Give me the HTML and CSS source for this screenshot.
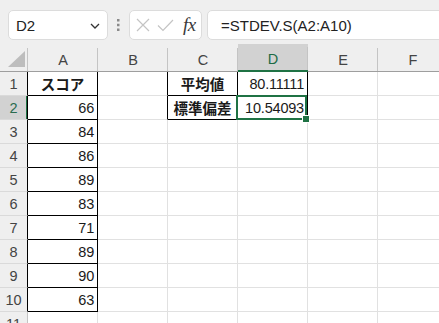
FILE: index.html
```html
<!DOCTYPE html>
<html lang="ja">
<head>
    <meta charset="UTF-8">
    <title>STDEV.S</title>
    <link rel="stylesheet" href="styles.css">
</head>
<body>

    <div class="toolbar">
        <div class="namebox">
            <span>D2</span>
            <svg width="10" height="6" viewBox="0 0 10 6"><path d="M1 1 L5 5 L9 1" fill="none" stroke="#333" stroke-width="1.3"/></svg>
        </div>
        <div class="grip">
            <svg width="3" height="12" viewBox="0 0 3 12"><rect x="0" y="0" width="2.5" height="2.5" fill="#8a8a8a"/><rect x="0" y="4.75" width="2.5" height="2.5" fill="#8a8a8a"/><rect x="0" y="9.5" width="2.5" height="2.5" fill="#8a8a8a"/></svg>
        </div>
        <div class="fxbox">
            <svg width="14" height="14" viewBox="0 0 14 14"><path d="M1 1 L13 13 M13 1 L1 13" stroke="#c4c4c4" stroke-width="1.2"/></svg>
            <svg width="17" height="13" viewBox="0 0 17 13"><path d="M1 6.5 L6 11.5 L16 1" fill="none" stroke="#c4c4c4" stroke-width="1.2"/></svg>
            <span class="fx">fx</span>
        </div>
        <div class="formula">=STDEV.S(A2:A10)</div>
    </div>

    <div class="sheet">
        <!-- column headers -->
        <div class="corner">
            <svg width="17" height="16" viewBox="0 0 17 16"><path d="M17 0 L17 16 L0 16 Z" fill="#bdbdbd"/></svg>
        </div>
        <div class="ch">A</div>
        <div class="ch">B</div>
        <div class="ch">C</div>
        <div class="ch ch-sel">D</div>
        <div class="ch">E</div>
        <div class="ch">F</div>

        <!-- row 1 -->
        <div class="rh rh-bk">1</div>
        <div class="cell lbl bk">スコア</div>
        <div class="cell bk-r"></div>
        <div class="cell lbl bk">平均値</div>
        <div class="cell num bk">80.11111</div>
        <div class="cell"></div>
        <div class="cell"></div>

        <!-- row 2 -->
        <div class="rh rh-bk rh-sel">2</div>
        <div class="cell num bk">66</div>
        <div class="cell bk-r"></div>
        <div class="cell lbl bk">標準偏差</div>
        <div class="cell num bk active">10.54093</div>
        <div class="cell"></div>
        <div class="cell"></div>

        <div class="rh rh-bk">3</div>
        <div class="cell num bk">84</div>
        <div class="cell"></div><div class="cell"></div><div class="cell"></div><div class="cell"></div><div class="cell"></div>

        <div class="rh rh-bk">4</div>
        <div class="cell num bk">86</div>
        <div class="cell"></div><div class="cell"></div><div class="cell"></div><div class="cell"></div><div class="cell"></div>

        <div class="rh rh-bk">5</div>
        <div class="cell num bk">89</div>
        <div class="cell"></div><div class="cell"></div><div class="cell"></div><div class="cell"></div><div class="cell"></div>

        <div class="rh rh-bk">6</div>
        <div class="cell num bk">83</div>
        <div class="cell"></div><div class="cell"></div><div class="cell"></div><div class="cell"></div><div class="cell"></div>

        <div class="rh rh-bk">7</div>
        <div class="cell num bk">71</div>
        <div class="cell"></div><div class="cell"></div><div class="cell"></div><div class="cell"></div><div class="cell"></div>

        <div class="rh rh-bk">8</div>
        <div class="cell num bk">89</div>
        <div class="cell"></div><div class="cell"></div><div class="cell"></div><div class="cell"></div><div class="cell"></div>

        <div class="rh rh-bk">9</div>
        <div class="cell num bk">90</div>
        <div class="cell"></div><div class="cell"></div><div class="cell"></div><div class="cell"></div><div class="cell"></div>

        <div class="rh rh-bk">10</div>
        <div class="cell num bk">63</div>
        <div class="cell"></div><div class="cell"></div><div class="cell"></div><div class="cell"></div><div class="cell"></div>

        <div class="rh">11</div>
        <div class="cell"></div><div class="cell"></div><div class="cell"></div><div class="cell"></div><div class="cell"></div><div class="cell"></div>
    </div>

</body>
</html>
```

FILE: styles.css
```css
/* Reset */
* {
    margin: 0;
    padding: 0;
    box-sizing: border-box;
}
body {
    font-family: 'Liberation Sans', 'Noto Sans CJK JP', sans-serif;
    background-color: #efefef;
    color: #222222;
    width: 439px;
    height: 323px;
    overflow: hidden;
}

/* Formula toolbar */
.toolbar {
    display: flex;
    height: 44px;
    padding: 10px 0 0 8px;
}
.namebox {
    width: 100px;
    height: 30px;
    background-color: #ffffff;
    border: 1px solid #dcdcdc;
    border-radius: 5px;
    display: flex;
    align-items: center;
    justify-content: space-between;
    padding: 0 7px 0 7px;
    font-size: 15px;
}
.namebox svg {
    margin-top: 1px;
}
.grip {
    width: 21px;
    height: 30px;
    display: flex;
    align-items: center;
    justify-content: center;
}
.fxbox {
    width: 73px;
    height: 30px;
    background-color: #ffffff;
    border: 1px solid #dcdcdc;
    border-radius: 5px;
    display: flex;
    align-items: center;
    padding-left: 6px;
    gap: 7px;
}
.fxbox .fx {
    font-family: 'Liberation Serif', 'DejaVu Serif', serif;
    font-style: italic;
    font-size: 19px;
    color: #3a3a3a;
    margin-left: 2px;
    letter-spacing: -0.5px;
}
.formula {
    flex: 1;
    height: 30px;
    margin-left: 5px;
    margin-right: -10px;
    background-color: #ffffff;
    border: 1px solid #dcdcdc;
    border-radius: 5px;
    display: flex;
    align-items: center;
    padding-left: 13px;
    font-size: 15px;
}

/* Sheet grid */
.sheet {
    display: grid;
    grid-template-columns: 28px repeat(6, 70px);
    grid-template-rows: 28px;
    grid-auto-rows: 24px;
    background-color: #ffffff;
}

/* Headers */
.corner,
.ch {
    background-color: #efefef;
    border-bottom: 1px solid #9e9e9e;
}
.corner {
    display: flex;
    align-items: flex-end;
    justify-content: flex-end;
    padding: 0 3px 4px 0;
    background-image: linear-gradient(#c4c4c4, #c4c4c4);
    background-size: 1px 23px;
    background-position: right bottom;
    background-repeat: no-repeat;
}
.ch {
    display: flex;
    align-items: center;
    justify-content: center;
    padding-top: 4px;
    font-size: 14.5px;
    color: #444444;
    background-image: linear-gradient(#c4c4c4, #c4c4c4);
    background-size: 1px 23px;
    background-position: right bottom;
    background-repeat: no-repeat;
}
.ch-sel {
    background-color: #d2d2d2;
    color: #1d6b45;
    border-bottom: 2px solid #1f7244;
}
.rh {
    background-color: #efefef;
    border-right: 1px solid #c4c4c4;
    border-bottom: 1px solid #dadada;
    display: flex;
    align-items: center;
    justify-content: center;
    font-size: 14.5px;
    color: #444444;
}
.rh-bk {
    border-right-color: #000000;
}
.rh-sel {
    background-color: #d2d2d2;
    color: #2a6c50;
    box-shadow: inset -1px 0 0 #1f7244;
}

/* Cells */
.cell {
    border-right: 1px solid #e1e1e1;
    border-bottom: 1px solid #e1e1e1;
    display: flex;
    align-items: center;
    font-size: 14.5px;
    color: #1a1a1a;
    white-space: nowrap;
}
.bk {
    border-right-color: #000000;
    border-bottom-color: #000000;
}
.bk-r {
    border-right-color: #000000;
}
.num {
    justify-content: flex-end;
    padding-right: 3px;
    letter-spacing: -0.2px;
}
.lbl {
    justify-content: center;
    font-family: 'Noto Sans CJK JP', sans-serif;
    font-weight: bold;
    font-size: 14.5px;
}

/* Active cell */
.active {
    position: relative;
}
.active::after {
    content: '';
    position: absolute;
    top: -1px;
    left: -2px;
    right: 0;
    bottom: -1px;
    border: 2px solid #1f7244;
}
.active::before {
    content: '';
    position: absolute;
    right: -3px;
    bottom: -4px;
    width: 6px;
    height: 6px;
    background-color: #1f7244;
    border: 1px solid #ffffff;
    z-index: 1;
}
```
